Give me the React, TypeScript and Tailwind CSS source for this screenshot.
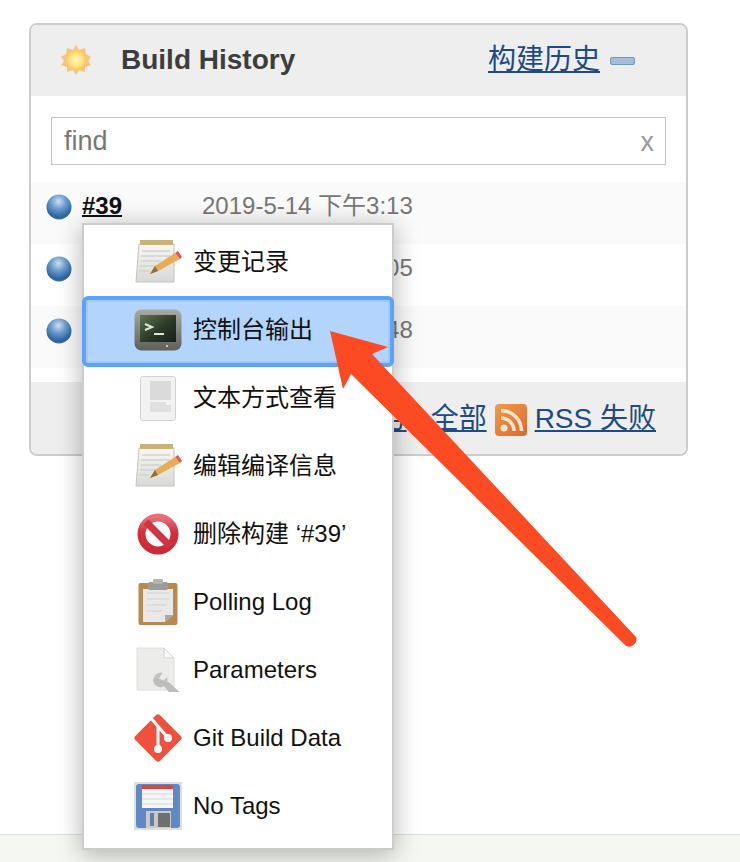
const sans = "font-['Liberation_Sans','Noto_Sans_CJK_SC',sans-serif]";

function BlueBall({ id }: { id: string }) {
  return (
    <svg width="26" height="28" viewBox="0 0 26 28" className="shrink-0 blur-[0.5px]">
      <defs>
        <radialGradient id={id} cx="48%" cy="28%" r="72%">
          <stop offset="0%" stopColor="#cfe0f0" />
          <stop offset="40%" stopColor="#6f9fd0" />
          <stop offset="85%" stopColor="#2c649f" />
          <stop offset="100%" stopColor="#3f6f9f" />
        </radialGradient>
      </defs>
      <circle cx="13" cy="14" r="12.5" fill={`url(#${id})`} />
    </svg>
  );
}

function Sun() {
  return (
    <svg width="30" height="30" viewBox="0 0 30 30" className="blur-[0.4px]">
      <defs>
        <radialGradient id="sun" cx="50%" cy="50%" r="50%">
          <stop offset="0%" stopColor="#fff8c4" />
          <stop offset="65%" stopColor="#fee27c" />
          <stop offset="100%" stopColor="#fbc862" />
        </radialGradient>
      </defs>
      <polygon
        points="15,0 18,5 24,3 25,9 30,12 27,16 30,20 24,22 24,27 18,25 15,30 12,25 6,27 6,22 0,20 3,16 0,12 5,9 6,3 12,5"
        fill="#f9c27e"
      />
      <circle cx="15" cy="15" r="10" fill="url(#sun)" />
    </svg>
  );
}

function Notepad({ id }: { id: string }) {
  return (
    <svg width="50" height="46" viewBox="0 0 50 46" className="blur-[0.4px]">
      <defs>
        <linearGradient id={id} x1="0" y1="0" x2="0" y2="1">
          <stop offset="0%" stopColor="#f7f7f3" />
          <stop offset="100%" stopColor="#d8d8d6" />
        </linearGradient>
      </defs>
      <path d="M6 5 H41 V43 H3 Z" fill={`url(#${id})`} stroke="#c2c2be" />
      <rect x="7" y="1" width="33" height="5" fill="#c9b27a" />
      <path d="M9 12 H37 M8 17 H37 M8 22 H28 M7 27 H24 M6 32 H16" stroke="#d2d2ce" strokeWidth="1.6" />
      <path d="M17 35 L22 27 L42 14 L47 20 L25 32 Z" fill="#e8ac55" />
      <path d="M17 35 L22 27 L25 32 Z" fill="#8f7040" />
      <path d="M42 14 L45 12 L49 18 L47 20 Z" fill="#dc5a50" />
    </svg>
  );
}

function Terminal() {
  return (
    <svg width="48" height="42" viewBox="0 0 48 42" className="blur-[0.4px]">
      <defs>
        <linearGradient id="term" x1="0" y1="0" x2="1" y2="1">
          <stop offset="0%" stopColor="#5d7550" />
          <stop offset="55%" stopColor="#2b3828" />
          <stop offset="100%" stopColor="#1a201a" />
        </linearGradient>
        <linearGradient id="termCase" x1="0" y1="0" x2="0" y2="1">
          <stop offset="0%" stopColor="#a9aba3" />
          <stop offset="100%" stopColor="#5d5f58" />
        </linearGradient>
      </defs>
      <rect x="0.5" y="0.5" width="47" height="41" rx="7" fill="url(#termCase)" />
      <rect x="6" y="6" width="36" height="27" fill="url(#term)" />
      <path d="M11 15 L18 18 L11 21" fill="none" stroke="#dfe8d6" strokeWidth="2" />
      <path d="M20 25 H30" stroke="#dfe8d6" strokeWidth="2" />
      <rect x="32" y="36" width="2" height="2" fill="#b9d38c" />
    </svg>
  );
}

function TextDoc() {
  return (
    <svg width="36" height="45" viewBox="0 0 36 45" className="blur-[0.4px]">
      <rect x="0.5" y="0.5" width="35" height="44" rx="2" fill="#f2f2f2" stroke="#d2d2d2" />
      <rect x="10" y="5" width="21" height="19" fill="#dadada" />
      <path d="M10 26 H26 V29 H31 V36 H10 Z" fill="#e0e0e0" />
    </svg>
  );
}

function NoEntry() {
  return (
    <svg width="42" height="42" viewBox="0 0 42 42" className="blur-[0.4px]">
      <defs>
        <linearGradient id="noEntry" x1="0" y1="0" x2="0" y2="1">
          <stop offset="0%" stopColor="#e8707a" />
          <stop offset="45%" stopColor="#d22f3c" />
          <stop offset="100%" stopColor="#c92a38" />
        </linearGradient>
      </defs>
      <circle cx="21" cy="21" r="16.5" fill="#fff" stroke="url(#noEntry)" strokeWidth="8" />
      <path d="M9 9 L33 33" stroke="#d03440" strokeWidth="7" />
    </svg>
  );
}

function Clipboard() {
  return (
    <svg width="40" height="47" viewBox="0 0 40 47" className="blur-[0.4px]">
      <rect x="0.5" y="4" width="39" height="42" rx="2" fill="#b98a4f" />
      <path d="M5 10 H35 V36 L27 43 H5 Z" fill="#e8e8e8" />
      <path d="M35 36 L27 43 V36 Z" fill="#a9a9a9" />
      <path d="M9 14 H31 M9 20 H31 M9 26 H28 M9 32 H24" stroke="#dcdcdc" strokeWidth="2" />
      <rect x="10" y="3" width="20" height="8" rx="2" fill="#9c9c9a" />
      <rect x="15" y="0" width="10" height="5" rx="1" fill="#b4b4b2" />
    </svg>
  );
}

function ParamDoc() {
  return (
    <svg width="44" height="46" viewBox="0 0 44 46" className="blur-[0.4px]">
      <path d="M1 1 H28 L38 11 V43 H1 Z" fill="#ececea" stroke="#dededc" />
      <path d="M28 1 V11 H38 Z" fill="#f9f9f9" stroke="#d4d4d2" />
      <path
        d="M18 30 A7 7 0 0 1 27 26 L23 31 L27 34 L31 30 A7 7 0 0 1 28 39 L33 45 L43 45 L36 38 L31 36 Z"
        fill="#c4c4c1"
      />
      <path d="M18 30 A7 7 0 0 0 28 39 L33 45 L43 45 L34 36 Z" fill="#bdbdba" />
    </svg>
  );
}

function GitLogo() {
  return (
    <svg width="50" height="50" viewBox="0 0 50 50" className="blur-[0.4px]">
      <rect x="7.5" y="7.5" width="35" height="35" rx="3" transform="rotate(45 25 25)" fill="#f0513c" />
      <path d="M17 4 L35 25 M25 13 V35" stroke="#fff" strokeWidth="3" fill="none" />
      <circle cx="35" cy="25" r="4" fill="#fff" />
      <circle cx="25" cy="36" r="4" fill="#fff" />
    </svg>
  );
}

function Floppy() {
  return (
    <svg width="48" height="48" viewBox="0 0 48 48" className="blur-[0.4px]">
      <rect width="48" height="48" fill="#dcdfe2" />
      <rect x="2" y="2" width="44" height="44" rx="3" fill="#5f89c4" />
      <rect x="8" y="3" width="31" height="23" fill="#f6f6f6" />
      <rect x="8" y="3" width="31" height="4" fill="#d9463e" />
      <path d="M8 12 H39 M8 17 H39 M8 22 H39" stroke="#d8d8d8" strokeWidth="1" />
      <rect x="12" y="29" width="25" height="17" fill="#c9c9c9" />
      <rect x="16" y="31" width="4" height="13" fill="#5f7fa5" />
      <rect x="24" y="31" width="12" height="14" fill="#6f6f6f" />
    </svg>
  );
}

function Rss() {
  return (
    <svg width="32" height="32" viewBox="0 0 32 32" className="shrink-0 blur-[0.3px]">
      <defs>
        <linearGradient id="rss" x1="0" y1="0" x2="1" y2="1">
          <stop offset="0%" stopColor="#f39a4e" />
          <stop offset="100%" stopColor="#dc6a26" />
        </linearGradient>
      </defs>
      <rect width="32" height="32" rx="4" fill="url(#rss)" />
      <circle cx="9" cy="24" r="3.5" fill="#fde6cf" />
      <path d="M6 14 A13 13 0 0 1 19 27" fill="none" stroke="#fde6cf" strokeWidth="3.5" />
      <path d="M6 6.5 A20.5 20.5 0 0 1 26.5 27" fill="none" stroke="#fde6cf" strokeWidth="3.5" />
    </svg>
  );
}

const menuItems = [
  { label: "变更记录", icon: <Notepad id="note1" /> },
  { label: "控制台输出", icon: <Terminal />, active: true },
  { label: "文本方式查看", icon: <TextDoc /> },
  { label: "编辑编译信息", icon: <Notepad id="note2" /> },
  { label: "删除构建 ‘#39’", icon: <NoEntry /> },
  { label: "Polling Log", icon: <Clipboard /> },
  { label: "Parameters", icon: <ParamDoc /> },
  { label: "Git Build Data", icon: <GitLogo /> },
  { label: "No Tags", icon: <Floppy /> },
];

const builds = [
  { id: "b39", num: "#39", date: "2019-5-14 下午3:13", bg: "bg-[#fafafa]" },
  { id: "b38", num: "#38", date: "2019-5-14 下午3:05", bg: "bg-white" },
  { id: "b37", num: "#37", date: "2019-5-14 下午2:48", bg: "bg-[#fafafa]" },
];

export default function App() {
  return (
    <div className={`relative flex h-[862px] w-[740px] flex-col overflow-hidden bg-white ${sans}`}>
      <div className="ml-[29px] mt-[23px] h-[433px] w-[659px] overflow-hidden rounded-lg border-2 border-[#cccccc]">
        <div className="flex h-[71px] items-center bg-[#eeeeee] pb-[2px] pl-[30px] pr-[51px]">
          <Sun />
          <span className="ml-[30px] text-[28px] font-bold text-[#3d3d3d]">Build History</span>
          <a className="ml-auto text-[28px] text-[#204a87] underline">构建历史</a>
          <span className="ml-[10px] mt-[2px] h-[8px] w-[25px] rounded-[2px] border border-[#6e97c6] bg-[#a5bed8]" />
        </div>
        <div className="bg-white px-[20px] pb-[17px] pt-[21px]">
          <div className="flex h-[48px] items-center justify-between border border-[#c4c4c4] pl-[12px] pr-[11px] text-[27px] text-[#777777]">
            <span>find</span>
            <span className="mt-[2px] text-[#999999]">x</span>
          </div>
        </div>
        {builds.map((b) => (
          <div key={b.id} className={`flex h-[62px] items-center pb-[13px] pl-[15px] ${b.bg}`}>
            <BlueBall id={b.id} />
            <a className="mb-[2px] ml-[10px] w-[120px] text-[24px] font-bold text-[#111111] underline decoration-2">{b.num}</a>
            <span className="mb-[2px] text-[24px] text-[#777777]">{b.date}</span>
          </div>
        ))}
        <div className="h-[14px] bg-white" />
        <div className="flex h-[72px] items-center justify-end bg-[#eeeeee] pr-[30px] pt-[3px] text-[28px] text-[#204a87]">
          <a className="mb-[2px] underline">趋势</a>
          <span className="ml-[8px] w-[16px]" />
          <a className="mb-[2px] underline">全部</a>
          <span className="ml-[8px]">
            <Rss />
          </span>
          <a className="mb-[2px] ml-[8px] underline">RSS 失败</a>
        </div>
      </div>

      <div className="mt-auto h-[28px] border-t border-[#dddddd] bg-[#f4f7f2]" />

      {/* popup menu lies over the panel */}
      <div className="absolute left-[82px] top-[223px] w-[312px] border-2 border-[#cccccc] bg-white pb-[8px] pt-[3px] shadow-[0_4px_24px_rgba(0,0,0,0.3)]">
        {menuItems.map((item) => (
          <div
            key={item.label}
            className={`flex items-center text-[24px] text-[#111111] ${
              item.active
                ? "-mx-[2px] -mb-[3px] h-[71px] rounded-[6px] border-[4px] border-[#5ba3f8] bg-[#b3d4fc] pb-[3px] pl-[47px] shadow-[inset_0_0_0_2px_#a2c9f5]"
                : "h-[68px] pl-[49px]"
            }`}
          >
            <span className="mr-[10px] flex w-[50px] shrink-0 justify-center">{item.icon}</span>
            <span>{item.label}</span>
          </div>
        ))}
      </div>

      {/* annotation arrow drawn on top of the screenshot */}
      <svg className="absolute left-0 top-0" width="740" height="862" viewBox="0 0 740 862">
        <path
          d="M330 331 L388 347 L372 354 L636 637 Q638 642 632 646 Q628 648 625 645 L351 374 L343 389 Z"
          fill="#fc4a22"
        />
      </svg>
    </div>
  );
}
